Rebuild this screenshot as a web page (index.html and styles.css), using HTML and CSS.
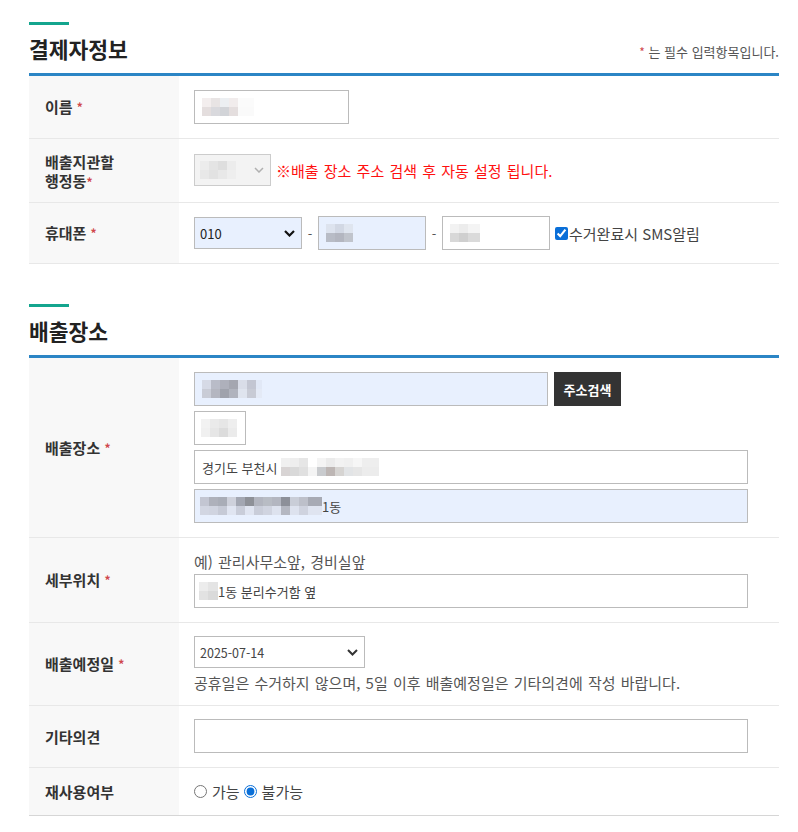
FILE: index.html
```html
<!DOCTYPE html>
<html lang="ko">
<head>
<meta charset="utf-8">
<title>배출 신청</title>
<link rel="stylesheet" href="styles.css">
</head>
<body>
<div class="page">
  <section class="sec">
    <div class="sec-bar"></div>
    <div class="sec-head">
      <h2>결제자정보</h2>
      <p class="req-note"><span class="star">*</span> 는 필수 입력항목입니다.</p>
    </div>
    <div class="row r-name">
      <div class="lab">이름&nbsp;<span class="star">*</span></div>
      <div class="val">
        <div class="inp w-name"><span class="mz mz-name"></span></div>
      </div>
    </div>
    <div class="row r-dong">
      <div class="lab lab-2"><span class="lab-line">배출지관할</span><span class="lab-line">행정동<span class="star">*</span></span></div>
      <div class="val">
        <div class="sel sel-dis"><span class="mz mz-dong"></span>
          <svg class="chev" width="10" height="6" viewBox="0 0 10 6"><polyline points="1,1 5,5 9,1" fill="none" stroke="#b0b0b0" stroke-width="1.5"/></svg>
        </div>
        <span class="warn">※배출 장소 주소 검색 후 자동 설정 됩니다.</span>
      </div>
    </div>
    <div class="row r-phone">
      <div class="lab">휴대폰&nbsp;<span class="star">*</span></div>
      <div class="val">
        <div class="sel sel-phone auto"><span>010</span>
          <svg class="chev" width="11" height="7" viewBox="0 0 11 7"><polyline points="1,1 5.5,5.5 10,1" fill="none" stroke="#111" stroke-width="2.2"/></svg>
        </div>
        <span class="dash">-</span>
        <div class="inp w-ph auto"><span class="mz mz-ph2"></span></div>
        <span class="dash">-</span>
        <div class="inp w-ph"><span class="mz mz-ph3"></span></div>
        <label class="chk"><input type="checkbox" checked>수거완료시 SMS알림</label>
      </div>
    </div>
  </section>

  <section class="sec sec-2">
    <div class="sec-bar"></div>
    <div class="sec-head">
      <h2>배출장소</h2>
    </div>
    <div class="row r-place">
      <div class="lab">배출장소&nbsp;<span class="star">*</span></div>
      <div class="val val-col">
        <div class="line">
          <div class="inp w-addr auto"><span class="mz mz-addr"></span></div>
          <button class="btn" type="button">주소검색</button>
        </div>
        <div class="inp w-zip"><span class="mz mz-zip"></span></div>
        <div class="inp w-full">경기도 부천시&nbsp;<span class="mz mz-city"></span></div>
        <div class="inp w-full auto"><span class="mz mz-detail"></span>1동</div>
      </div>
    </div>
    <div class="row r-spot">
      <div class="lab">세부위치&nbsp;<span class="star">*</span></div>
      <div class="val val-col">
        <p class="hint">예) 관리사무소앞, 경비실앞</p>
        <div class="inp w-full"><span class="mz mz-spot"></span>1동 분리수거함 옆</div>
      </div>
    </div>
    <div class="row r-date">
      <div class="lab">배출예정일&nbsp;<span class="star">*</span></div>
      <div class="val val-col">
        <div class="sel sel-date"><span>2025-07-14</span>
          <svg class="chev" width="11" height="7" viewBox="0 0 11 7"><polyline points="1,1 5.5,5.5 10,1" fill="none" stroke="#333" stroke-width="2"/></svg>
        </div>
        <p class="hint hint-date">공휴일은 수거하지 않으며, 5일 이후 배출예정일은 기타의견에 작성 바랍니다.</p>
      </div>
    </div>
    <div class="row r-etc">
      <div class="lab">기타의견</div>
      <div class="val">
        <div class="inp w-full"></div>
      </div>
    </div>
    <div class="row r-reuse">
      <div class="lab">재사용여부</div>
      <div class="val">
        <label class="rad"><input type="radio" name="reuse">가능</label>
        <label class="rad"><input type="radio" name="reuse" checked>불가능</label>
      </div>
    </div>
  </section>
</div>
</body>
</html>
```
FILE: styles.css
```css
body {
  margin: 0;
  background: #fff;
  color: #333;
  font-family: "Noto Sans CJK KR", "Noto Sans", "Liberation Sans", sans-serif;
}

.page {
  width: 750px;
  margin-left: 29px;
  padding-top: 22px;
}

.sec-2 {
  margin-top: 40px;
}

.sec-bar {
  width: 40px;
  height: 3px;
  background: #14a58e;
}

.sec-head {
  display: flex;
  justify-content: space-between;
  align-items: center;
  height: 48px;
  border-bottom: 3px solid #2b85c5;
}

.sec-head h2 {
  margin: 0;
  font-size: 21.5px;
  line-height: 26px;
  font-weight: 700;
  color: #222;
}

.req-note {
  margin: 4px 0 0;
  font-size: 13px;
  color: #555;
}

.star {
  color: #d0484c;
  font-size: 12px;
}

.row {
  display: grid;
  grid-template-columns: 150px 1fr;
  border-bottom: 1px solid #e8e8e8;
}

.lab {
  background: #f8f8f8;
  padding-left: 16px;
  display: flex;
  align-items: center;
  font-size: 15px;
  font-weight: 700;
  line-height: 20px;
  color: #333;
}

.lab-2 {
  flex-direction: column;
  align-items: flex-start;
  justify-content: center;
  gap: 0;
}

.lab-line {
  display: block;
  height: 19px;
  line-height: 19px;
}

.val {
  display: flex;
  align-items: center;
  padding: 14px 0 14px 15px;
}

.val-col {
  flex-direction: column;
  align-items: flex-start;
}

.r-dong .val { padding: 15px 0 16px 15px; }
.r-phone .val { padding: 13px 0 13px 15px; }
.r-place .val { padding: 14px 0 14px 15px; gap: 5px; }
.r-date .val { padding: 13px 0 12px 15px; }
.r-etc .val { padding: 13px 0 14px 15px; }
.r-reuse .val { padding: 14px 0 14px 15px; }
.r-reuse { border-bottom-color: #d6d6d6; }

.inp {
  box-sizing: border-box;
  height: 34px;
  border: 1px solid #bbb;
  background: #fff;
  display: flex;
  align-items: center;
  padding: 0 7px;
  font-size: 13px;
  color: #444;
  white-space: nowrap;
}

.auto {
  background: #e8f0fe;
}

.w-name { width: 155px; }
.w-ph { width: 108px; }
.w-addr { width: 354px; }
.w-zip { width: 52px; padding: 0 6px; }
.w-full { width: 554px; }

.line {
  display: flex;
  gap: 6px;
}

.btn {
  width: 67px;
  height: 34px;
  border: 0;
  background: #333;
  color: #fff;
  font-family: inherit;
  font-size: 13px;
  font-weight: 700;
  padding: 0;
}

.sel {
  box-sizing: border-box;
  height: 32px;
  border: 1px solid #bbb;
  display: flex;
  align-items: center;
  justify-content: space-between;
  padding: 0 6px 0 5px;
  font-size: 13px;
  color: #222;
}

.sel-dis {
  width: 77px;
  background: #f3f3f3;
  border-color: #ccc;
}

.sel-phone {
  width: 108px;
}

.sel-date {
  width: 171px;
  color: #444;
  font-size: 12.5px;
}

.chev {
  display: block;
  flex: none;
}

.warn {
  margin-left: 5px;
  font-size: 15px;
  word-spacing: 1px;
  color: #ff1010;
}

.dash {
  width: 16px;
  text-align: center;
  font-size: 13px;
  color: #555;
}

.chk {
  display: flex;
  align-items: center;
  margin-left: 5px;
  font-size: 15px;
  color: #444;
}

.chk input {
  width: 13px;
  height: 13px;
  margin: 0 1px 0 0;
  accent-color: #0a6fd8;
}

.hint {
  margin: 0;
  font-size: 15px;
  word-spacing: 1px;
  line-height: 20px;
  color: #555;
}

.r-spot .hint {
  margin-bottom: 2px;
}

.hint-date {
  margin-top: 5px;
}

.rad {
  display: flex;
  align-items: center;
  font-size: 15px;
  line-height: 19px;
  color: #444;
  margin-right: 4px;
}

.rad input {
  width: 13px;
  height: 13px;
  margin: 0 5px 0 0;
  accent-color: #0a6fd8;
}

/* mosaic placeholders for masked personal data */
.mz {
  display: inline-block;
  flex: none;
  height: 18px;
  background-repeat: no-repeat;
  background-size: 100% 50%, 100% 50%;
  background-position: top left, bottom left;
}

.mz-name {
  width: 52px;
  background-image:
    linear-gradient(90deg, #f3eeee 0 9px, #e8e4e4 9px 18px, #eceff2 18px 27px, #f1ecec 27px 36px, #fbfbfb 36px),
    linear-gradient(90deg, #e4dede 0 9px, #d9d9dd 9px 18px, #d2d4d8 18px 27px, #e4dede 27px 36px, #fafafa 36px);
}

.mz-dong {
  width: 36px;
  background-image:
    linear-gradient(90deg, #ececec 0 9px, #e4e4e4 9px 18px, #dedede 18px 27px, #ececec 27px),
    linear-gradient(90deg, #e8e8e8 0 9px, #e2e2e2 9px 18px, #e8e8e8 18px 27px, #eeeeee 27px);
}

.mz-ph2 {
  width: 27px;
  background-image:
    linear-gradient(90deg, #dde3ee 0 9px, #d2d8e4 9px 18px, #dfe5ef 18px),
    linear-gradient(90deg, #b8bcc6 0 9px, #b3b6c0 9px 18px, #c0c4cc 18px);
}

.mz-ph3 {
  width: 30px;
  background-image:
    linear-gradient(90deg, #f2f2f2 0 9px, #ececec 9px 18px, #f4f4f4 18px),
    linear-gradient(90deg, #d8d8d8 0 9px, #cfcfcf 9px 18px, #dadada 18px);
}

.mz-addr {
  width: 60px;
  background-image:
    linear-gradient(90deg, #d6dae6 0 9px, #b9bcc8 9px 18px, #aeb0bb 18px 27px, #a4a6b0 27px 36px, #d9dde8 36px 45px, #c3c6d2 45px 54px, #e1e8f6 54px),
    linear-gradient(90deg, #c9ccd6 0 9px, #b4b6c0 9px 18px, #9fa2ac 18px 27px, #b0b3bd 27px 36px, #dfe4ee 36px 45px, #c8cbd5 45px 54px, #e4eaf6 54px);
}

.mz-zip {
  width: 36px;
  background-image:
    linear-gradient(90deg, #f2f2f2 0 9px, #eaeaea 9px 18px, #e6e6e6 18px 27px, #eeeeee 27px),
    linear-gradient(90deg, #f0f0f0 0 9px, #e6e6e6 9px 18px, #dcdcdc 18px 27px, #ebebeb 27px);
}

.mz-city {
  width: 98px;
  background-image:
    linear-gradient(90deg, #f0f0f0 0 9px, #eeeeee 9px 18px, #e6e6e6 18px 27px, #ffffff 27px 36px, #f4f4f4 36px 45px, #ebebeb 45px 54px, #f2f2f2 54px 63px, #f0f0f0 63px 72px, #f6f6f6 72px 81px, #eeeeee 81px),
    linear-gradient(90deg, #d8d4d4 0 9px, #d9d9d9 9px 18px, #e0e0e0 18px 27px, #f4f4f4 27px 36px, #c9cbce 36px 45px, #bdb6b4 45px 54px, #d6d4d2 54px 63px, #e2e4e6 63px 72px, #e6e6e6 72px 81px, #ececec 81px);
}

.mz-detail {
  width: 122px;
  margin-left: -2px;
  background-image:
    linear-gradient(90deg, #c3c6d2 0 9px, #aeb1bb 9px 18px, #a9adb7 18px 27px, #ced1db 27px 36px, #a3a7b2 36px 45px, #8e9198 45px 54px, #b2b5bf 54px 63px, #b8bcc4 63px 72px, #b3b6c0 72px 81px, #8d9099 81px 90px, #c9cdd7 90px 99px, #bdc0ca 99px 108px, #a7aab4 108px),
    linear-gradient(90deg, #d2d6e2 0 9px, #d0d4e0 9px 18px, #c6cad6 18px 27px, #e0e5f1 27px 36px, #c9cdd9 36px 45px, #e0e5f1 45px 54px, #c9cdd9 54px 63px, #d0d4e0 63px 72px, #dde2ee 72px 81px, #b4b7c1 81px 90px, #dde2ee 90px 99px, #cfd3df 99px 108px, #dfe4f0 108px);
}

.mz-spot {
  width: 19px;
  margin-left: -3px;
  background-image:
    linear-gradient(90deg, #ececec 0 9px, #e4e4e4 9px),
    linear-gradient(90deg, #e2e2e2 0 9px, #dadada 9px);
}
```
